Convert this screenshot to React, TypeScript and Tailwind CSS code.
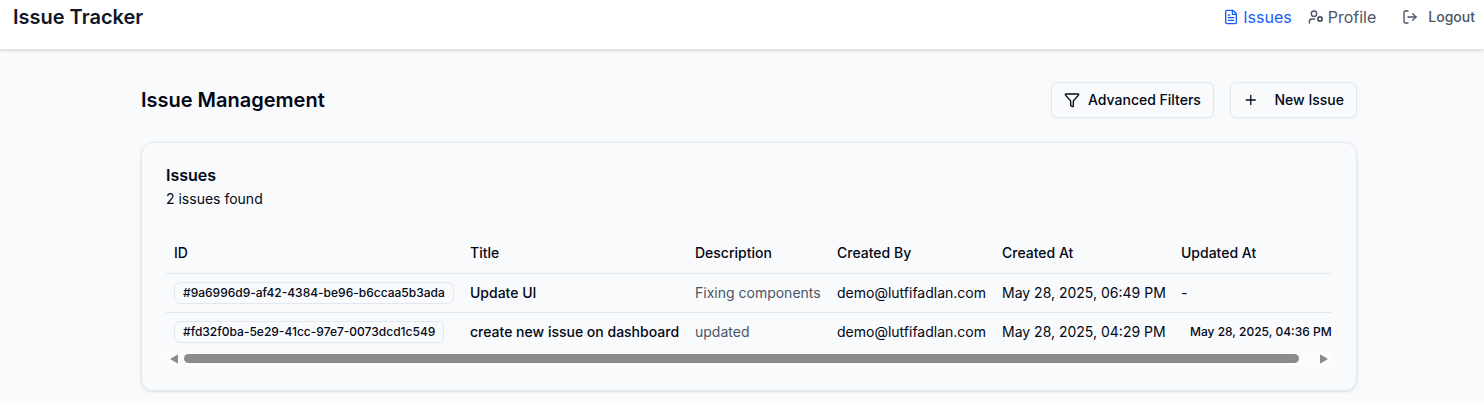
import React from "react";
import { FileText, Funnel, LogOut, Plus, UserCog } from "lucide-react";

const issues = [
  {
    id: "#9a6996d9-af42-4384-be96-b6ccaa5b3ada",
    title: "Update UI",
    description: "Fixing components",
    by: "demo@lutfifadlan.com",
    created: "May 28, 2025, 06:49 PM",
    updated: "",
  },
  {
    id: "#fd32f0ba-5e29-41cc-97e7-0073dcd1c549",
    title: "create new issue on dashboard",
    description: "updated",
    by: "demo@lutfifadlan.com",
    created: "May 28, 2025, 04:29 PM",
    updated: "May 28, 2025, 04:36 PM",
  },
];

function Header() {
  return (
    <header className="flex h-[50px] items-start justify-between border-b border-gray-200 bg-white pl-[13px] pr-[9px] shadow-sm">
      <div className="pt-[3px] text-xl leading-7 font-semibold text-gray-900">Issue Tracker</div>
      <nav className="flex h-[34px] items-center text-gray-600">
        <a className="flex items-center gap-1 text-base text-[#155dfc]">
          <FileText size={16} />
          Issues
        </a>
        <a className="ml-4 flex items-center gap-1 text-base">
          <UserCog size={16} />
          Profile
        </a>
        <button className="ml-[26px] flex items-center text-sm font-medium">
          <LogOut size={16} className="mr-2.5" />
          Logout
        </button>
      </nav>
    </header>
  );
}

function IssueTable() {
  return (
    <div className="overflow-hidden">
      <table className="w-[1191px] table-fixed text-left text-sm">
        <colgroup>
          <col className="w-[296px]" />
          <col className="w-[225px]" />
          <col className="w-[142px]" />
          <col className="w-[165px]" />
          <col className="w-[179px]" />
          <col className="w-[184px]" />
        </colgroup>
        <thead>
          <tr className="h-10 border-b border-slate-200">
            {["ID", "Title", "Description", "Created By", "Created At", "Updated At"].map((h) => (
              <th key={h} className="px-2 font-medium whitespace-nowrap">{h}</th>
            ))}
          </tr>
        </thead>
        <tbody>
          {issues.map((issue) => (
            <tr key={issue.id} className="h-[39px] border-b border-slate-200 last:border-0">
              <td className="px-2 whitespace-nowrap">
                <span className="inline-flex h-[22px] items-center rounded-md border border-slate-200 px-2 text-xs font-medium">
                  {issue.id}
                </span>
              </td>
              <td className="px-2 font-medium whitespace-nowrap">{issue.title}</td>
              <td className="px-2 whitespace-nowrap text-gray-600">{issue.description}</td>
              <td className="px-2 whitespace-nowrap">{issue.by}</td>
              <td className="px-2 whitespace-nowrap">{issue.created}</td>
              <td className="px-2 whitespace-nowrap">
                {issue.updated ? (
                  <span className="inline-flex h-[22px] items-center px-[9px] text-xs font-medium">{issue.updated}</span>
                ) : (
                  "-"
                )}
              </td>
            </tr>
          ))}
        </tbody>
      </table>
    </div>
  );
}

function ScrollBar() {
  return (
    <div className="flex h-[15px] items-center bg-[#fcfcfc] pl-1 pr-1">
      <svg width="8" height="10" viewBox="0 0 8 10" fill="#8b8b8b">
        <path d="M7.2 .7Q8 .2 8 1V9Q8 9.8 7.2 9.3L.8 5.5Q0 5 .8 4.5Z" />
      </svg>
      <div className="ml-1.5 h-[9px] w-[1115px] rounded-full bg-[#8b8b8b]" />
      <svg className="ml-auto" width="8" height="10" viewBox="0 0 8 10" fill="#8b8b8b">
        <path d="M.8 .7Q0 .2 0 1V9Q0 9.8 .8 9.3L7.2 5.5Q8 5 7.2 4.5Z" />
      </svg>
    </div>
  );
}

export default function App() {
  return (
    <div className="h-[401px] overflow-hidden bg-[#f9fafc] font-['Inter',sans-serif] text-[#020817]">
      <Header />
      <main className="ml-[141px] w-[1216px] pt-8">
        <div className="flex items-center justify-between">
          <h1 className="text-xl font-semibold">Issue Management</h1>
          <div className="flex gap-4">
            <button className="flex h-9 w-[163px] items-center gap-2 rounded-md border border-slate-200 px-3 text-sm font-medium whitespace-nowrap shadow-xs">
              <Funnel size={16} />
              Advanced Filters
            </button>
            <button className="flex h-9 w-[127px] items-center gap-4 rounded-md border border-slate-200 px-3 text-sm font-medium whitespace-nowrap shadow-xs">
              <Plus size={16} />
              New Issue
            </button>
          </div>
        </div>
        <section className="mt-6 h-[249px] rounded-xl border border-slate-200 px-6 pt-6 shadow-sm">
          <h2 className="text-base leading-4 font-semibold">Issues</h2>
          <p className="mt-1.5 mb-6 text-sm">2 issues found</p>
          <IssueTable />
          <ScrollBar />
        </section>
      </main>
    </div>
  );
}
